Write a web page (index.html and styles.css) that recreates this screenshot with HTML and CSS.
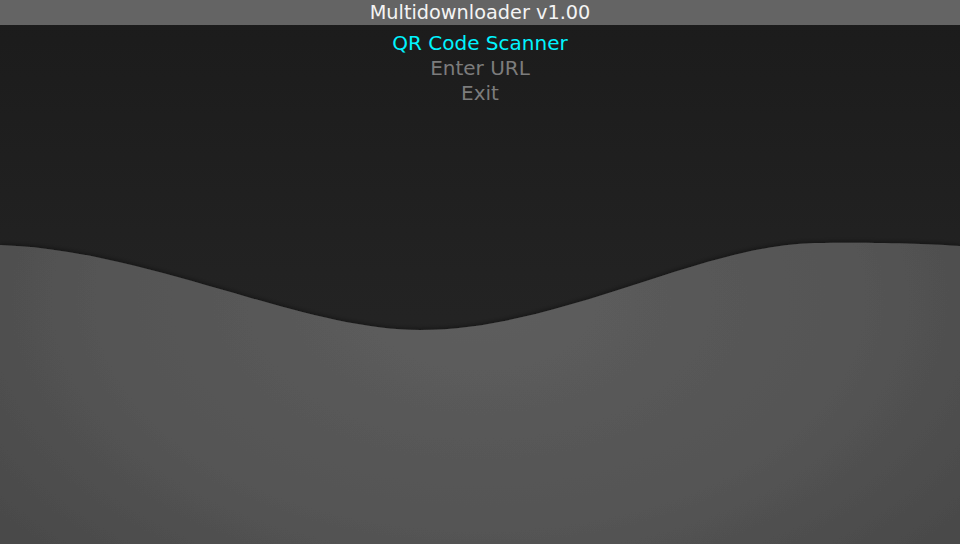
FILE: index.html
```html
<!DOCTYPE html>
<html lang="en">
<head>
<meta charset="utf-8">
<title>Multidownloader v1.00</title>
<link rel="stylesheet" href="styles.css">
</head>
<body>
<div class="screen">
  <svg class="backdrop" width="960" height="544" viewBox="0 0 960 544" aria-hidden="true">
    <defs>
      <linearGradient id="sky" x1="0" y1="0" x2="0" y2="1">
        <stop offset="0" stop-color="#1b1b1b"/>
        <stop offset="0.5" stop-color="#222222"/>
        <stop offset="1" stop-color="#282828"/>
      </linearGradient>
      <radialGradient id="hill" cx="480" cy="300" r="640" gradientUnits="userSpaceOnUse" gradientTransform="translate(480 300) scale(1 0.6) translate(-480 -300)">
        <stop offset="0" stop-color="#5e5e5e"/>
        <stop offset="0.6" stop-color="#545454"/>
        <stop offset="1" stop-color="#484848"/>
      </radialGradient>
      <filter id="shade" x="-5%" y="-20%" width="110%" height="140%">
        <feGaussianBlur in="SourceAlpha" stdDeviation="2.5"/>
        <feOffset dy="-1.5"/>
        <feComponentTransfer><feFuncA type="linear" slope="0.45"/></feComponentTransfer>
        <feMerge><feMergeNode/><feMergeNode in="SourceGraphic"/></feMerge>
      </filter>
    </defs>
    <rect width="960" height="544" fill="url(#sky)"/>
    <path filter="url(#shade)" fill="url(#hill)" d="M0,245 C150,250 300,330 420,330 C560,330 700,245 815,243 C880,242 930,244 960,246 L960,560 L0,560 Z"/>
  </svg>
  <header class="titlebar">Multidownloader v1.00</header>
  <ul class="menu">
    <li class="item selected">QR Code Scanner</li>
    <li class="item">Enter URL</li>
    <li class="item">Exit</li>
  </ul>
</div>
</body>
</html>
```
FILE: styles.css
```css
html, body {
  margin: 0;
  padding: 0;
  width: 960px;
  height: 544px;
  overflow: hidden;
  background: #1b1b1b;
}

.screen {
  position: relative;
  width: 960px;
  height: 544px;
  display: flex;
  flex-direction: column;
  font-family: "DejaVu Sans", "Liberation Sans", sans-serif;
  font-size: 20px;
}

.backdrop {
  position: absolute;
  inset: 0;
  z-index: 0;
  display: block;
}

.titlebar {
  position: relative;
  z-index: 1;
  height: 25px;
  line-height: 25px;
  font-size: 19.3px;
  background: #646464;
  color: #f4f4f4;
  text-align: center;
}

.menu {
  position: relative;
  z-index: 1;
  list-style: none;
  margin: 0;
  padding: 6px 0 0;
  display: flex;
  flex-direction: column;
  align-items: center;
}

.item {
  line-height: 25px;
  color: #7c7c7c;
}

.item.selected {
  color: #00f4ff;
}
```
